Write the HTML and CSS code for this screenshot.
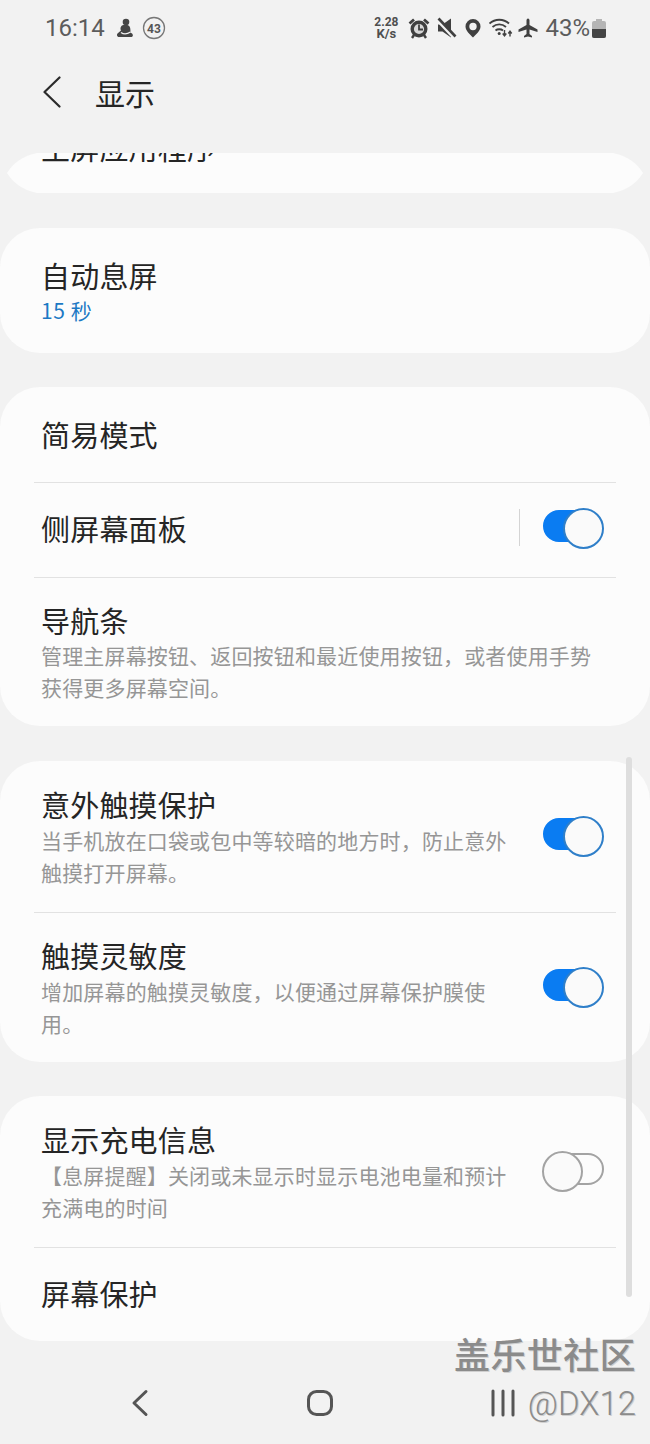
FILE: index.html
```html
<!DOCTYPE html>
<html lang="zh-CN">
<head>
    <meta charset="UTF-8">
    <meta name="viewport" content="width=device-width, initial-scale=1.0">
    <title>显示</title>
    <link rel="stylesheet" href="styles.css">
</head>
<body>

    <div class="status-bar">
        <div class="status-left">
            <span class="clock">16:14</span>
            <svg class="ic-figure" width="18" height="20" viewBox="0 0 18 20"><circle cx="10" cy="4" r="3.300" fill="#454545"/><path d="M7.500 7C4.500 7.500 4 10.500 5 12.500L1.500 15.500C.5 16.500 1 19 3 19H15C17 19 17.500 17 16 15.500L14.500 14.500C14.500 11 14.500 8 11.500 7z" fill="#454545"/><path d="M5 14.500c2.500 1.800 6 1.800 9.500-.5" stroke="#f2f2f2" stroke-width="1.400" fill="none"/></svg>
            <svg class="ic-badge" width="24" height="24" viewBox="0 0 24 24"><circle cx="12" cy="12" r="10.500" fill="none" stroke="#777" stroke-width="1.300"/><text x="12" y="16.500" text-anchor="middle" class="badge-text">43</text></svg>
        </div>
        <div class="status-right">
            <div class="net-speed"><span>2.28</span><span class="net-unit">K/s</span></div>
            <svg class="ic-alarm" width="22" height="22" viewBox="0 0 22 22"><circle cx="11" cy="12" r="6.800" fill="#d8d8d8" stroke="#404040" stroke-width="3.400"/><path d="M11 7.500V12.500H15" stroke="#404040" stroke-width="1.800" fill="none"/><path d="M1.500 6.500L6 2.500M20.500 6.500L16 2.500" stroke="#404040" stroke-width="2.800"/><path d="M6 18l-2 3M16 18l2 3" stroke="#404040" stroke-width="2.400"/></svg>
            <svg class="ic-mute" width="20" height="22" viewBox="0 0 20 22"><path d="M1 7.500h4.500L14 1.500V20.500L5.500 14.500H1z" fill="#404040"/><path d="M0 2.500L17.500 21" stroke="#f2f2f2" stroke-width="3.600"/><path d="M1.500 1.500L18.500 19.500" stroke="#404040" stroke-width="2.600"/></svg>
            <svg class="ic-pin" width="16" height="22" viewBox="0 0 16 22"><path fill-rule="evenodd" d="M8 2a7.500 7.500 0 0 0-7.500 7.500C.5 14 5.500 18 8 20.500 10.500 18 15.500 14 15.500 9.500A7.500 7.500 0 0 0 8 2zm0 3.800a3.700 3.700 0 1 1 0 7.400A3.700 3.700 0 0 1 8 5.800z" fill="#404040"/></svg>
            <svg class="ic-wifi" width="24" height="22" viewBox="0 0 24 22"><path d="M0.500 6.500C6 1.500 14.500 1.500 20 6.500M3.500 10C7.500 6.500 13 6.500 17 10M6.500 13.500C8.500 11.800 12 11.800 14 13.500" stroke="#404040" stroke-width="1.800" fill="none"/><circle cx="10.200" cy="16.500" r="1.500" fill="#404040"/><path d="M15.500 13v5.500M13.700 16.500l1.800 2.300 1.800-2.300M21 19.500v-5M19.300 16.500l1.700-2.300 1.700 2.300" stroke="#404040" stroke-width="1.400" fill="none"/></svg>
            <svg class="ic-plane" width="20" height="22" viewBox="0 0 20 22"><path d="M10 1.500c-1 0-1.500 1-1.500 2V8L.5 12.500V15l8-2.500V17L6 19v1.500l4-1 4 1V19l-2.500-2v-4.500l8 2.500v-2.500L11.500 8V3.500c0-1-.5-2-1.500-2z" fill="#404040"/></svg>
            <span class="battery-pct">43%</span>
            <div class="battery"><div class="battery-fill"></div></div>
        </div>
    </div>

    <header class="top-bar">
        <svg class="back" width="18" height="32" viewBox="0 0 18 32"><path d="M16.500 1.500L1.500 16l15 14.500" stroke="#2b2b2b" stroke-width="2.200" fill="none" stroke-linecap="round" stroke-linejoin="round"/></svg>
        <h1>显示</h1>
    </header>

    <main class="scroller">
        <section class="card card-cut">
            <div class="title cut-title">主屏应用程序</div>
        </section>

        <section class="card">
            <div class="row row-value">
                <div class="title">自动息屏</div>
                <div class="value">15 秒</div>
            </div>
        </section>

        <section class="card card-gap">
            <div class="row row-single"><div class="title">简易模式</div></div>
            <div class="row row-single row-switch">
                <div class="title">侧屏幕面板</div>
                <div class="bar"></div>
                <div class="switch on"></div>
            </div>
            <div class="row row-nav">
                <div class="title">导航条</div>
                <div class="desc">管理主屏幕按钮、返回按钮和最近使用按钮，或者使用手势<br>获得更多屏幕空间。</div>
            </div>
        </section>

        <section class="card">
            <div class="row row-switch">
                <div class="text">
                    <div class="title">意外触摸保护</div>
                    <div class="desc">当手机放在口袋或包中等较暗的地方时，防止意外<br>触摸打开屏幕。</div>
                </div>
                <div class="switch on"></div>
            </div>
            <div class="row row-switch">
                <div class="text">
                    <div class="title">触摸灵敏度</div>
                    <div class="desc">增加屏幕的触摸灵敏度，以便通过屏幕保护膜使<br>用。</div>
                </div>
                <div class="switch on"></div>
            </div>
        </section>

        <section class="card">
            <div class="row row-switch">
                <div class="text">
                    <div class="title">显示充电信息</div>
                    <div class="desc">【息屏提醒】关闭或未显示时显示电池电量和预计<br>充满电的时间</div>
                </div>
                <div class="switch"></div>
            </div>
            <div class="row row-last"><div class="title">屏幕保护</div></div>
        </section>

        <div class="scrollbar"></div>
    </main>

    <nav class="nav-bar">
        <svg width="18" height="28" viewBox="0 0 18 28"><path d="M15 2.500L3 14l12 11.500" stroke="#555" stroke-width="3" fill="none" stroke-linecap="round" stroke-linejoin="round"/></svg>
        <svg width="28" height="28" viewBox="0 0 28 28"><rect x="2.500" y="2.500" width="23" height="23" rx="8" stroke="#555" stroke-width="3" fill="none"/></svg>
        <svg width="26" height="28" viewBox="0 0 26 28"><path d="M3 2v24M13 2v24M23 2v24" stroke="#555" stroke-width="3" stroke-linecap="round"/></svg>
    </nav>

    <div class="watermark">
        <div class="wm-name">盖乐世社区</div>
        <div class="wm-user">@DX12</div>
    </div>

</body>
</html>
```

FILE: styles.css
```css
* {
    box-sizing: border-box;
}
html, body {
    margin: 0;
    padding: 0;
}
body {
    position: relative;
    width: 650px;
    height: 1444px;
    overflow: hidden;
    display: flex;
    flex-direction: column;
    background-color: #f2f2f2;
    color: #252525;
    font-family: "Noto Sans CJK SC", "Noto Sans", sans-serif;
}
.status-bar {
    height: 56px;
    padding: 0 44px 0 45px;
    display: flex;
    justify-content: space-between;
    align-items: center;
    color: #5c5c5c;
    font-family: Roboto, sans-serif;
}
.status-left, .status-right {
    display: flex;
    align-items: center;
}
.clock {
    font-size: 24px;
    margin-right: 11px;
}
.ic-figure {
    margin-right: 8px;
}
.badge-text {
    font-family: Roboto, sans-serif;
    font-size: 12px;
    font-weight: 700;
    fill: #555;
}
.net-speed {
    display: flex;
    flex-direction: column;
    align-items: center;
    font-size: 12px;
    font-weight: 700;
    line-height: 11px;
    color: #4f4f4f;
}
.net-unit {
    font-size: 13px;
    line-height: 12px;
}
.ic-alarm {
    margin-left: 10px;
}
.ic-mute {
    margin-left: 7px;
}
.ic-pin {
    margin-left: 8px;
}
.ic-wifi {
    margin-left: 8px;
}
.ic-plane {
    margin-left: 5px;
}
.battery-pct {
    font-size: 24px;
    margin-left: 7px;
}
.battery {
    position: relative;
    width: 14px;
    height: 17px;
    margin: 2px 0 0 2px;
    background-color: #b5b5b5;
    border-radius: 2px;
}
.battery::before {
    content: "";
    position: absolute;
    top: -2px;
    left: 4px;
    width: 6px;
    height: 2px;
    background-color: #b5b5b5;
}
.battery-fill {
    position: absolute;
    left: 0;
    right: 0;
    bottom: 0;
    height: 9px;
    background-color: #454545;
    border-radius: 0 0 2px 2px;
}
.top-bar {
    height: 97px;
    padding: 0 0 25px 43px;
    display: flex;
    align-items: center;
}
.top-bar h1 {
    margin: 0 0 0 34px;
    font-size: 30px;
    font-weight: 400;
}
.scroller {
    position: relative;
    flex: 1;
    overflow: hidden;
}
.card {
    background-color: #fcfcfc;
    border-radius: 40px;
    margin-bottom: 34px;
}
.card-gap {
    margin-bottom: 35px;
}
.card-cut {
    height: 40px;
    margin: 0 7px 35px;
    border-radius: 0;
    overflow: hidden;
    clip-path: path("M30 0 Q10 4 0 20 Q10 36 30 40 L606 40 Q626 36 636 20 Q626 4 606 0 Z");
}
.cut-title {
    margin: -26px 0 0 34px;
}
.title {
    font-size: 29px;
    line-height: 40px;
    letter-spacing: .2px;
}
.text {
    padding-bottom: 1px;
}
.text .title {
    margin-bottom: 1px;
}
.desc {
    font-size: 21px;
    line-height: 31.5px;
    letter-spacing: .16px;
    color: #969696;
}
.value {
    font-size: 21px;
    line-height: 32px;
    letter-spacing: .6px;
    margin-top: -1px;
    color: #1c79c4;
}
.row {
    position: relative;
    margin: 0 34px;
    padding: 0 7px;
}
.row + .row {
    border-top: 1px solid #e2e2e2;
}
.row-value {
    height: 125px;
    padding-top: 27px;
}
.row-single {
    height: 95px;
    padding-top: 27px;
}
.row-nav {
    height: 149px;
    padding-top: 22px;
}
.row-switch {
    display: flex;
    align-items: center;
    min-height: 151px;
}
.row-switch + .row-switch {
    min-height: 150px;
}
.row-single.row-switch {
    min-height: 95px;
    padding-top: 0;
    padding-bottom: 5px;
}
.row-switch .text {
    flex: 1;
}
.row-last {
    height: 94px;
    padding-top: 25px;
}
.bar {
    width: 1px;
    height: 37px;
    margin-left: auto;
    background-color: #d4d4d4;
}
.row-single.row-switch .switch {
    margin-left: 23px;
    margin-bottom: 3px;
}
.switch {
    position: relative;
    width: 58px;
    height: 32px;
    margin: 0 5px 5px 0;
    border: 2px solid #a3a3a3;
    border-radius: 16px;
    flex-shrink: 0;
}
.switch::after {
    content: "";
    position: absolute;
    top: -4.500px;
    left: -6px;
    width: 37px;
    height: 37px;
    border: 2px solid #a3a3a3;
    border-radius: 50%;
    background-color: #fafafa;
}
.switch.on {
    width: 57px;
    margin-right: 9px;
    border-color: #0a7cf2;
    background-color: #0a7cf2;
}
.switch.on::after {
    left: auto;
    right: -6px;
    border-color: #2f7fc9;
}
.scrollbar {
    position: absolute;
    top: 604px;
    left: 626px;
    width: 6px;
    height: 540px;
    border-radius: 3px;
    background-color: #dedede;
}
.nav-bar {
    height: 69px;
    padding: 14px 134px 0 131px;
    display: flex;
    justify-content: space-between;
    align-items: flex-start;
}
.watermark {
    position: absolute;
    right: 14px;
    top: 1329px;
    text-align: right;
    color: #8b8b8b;
    text-shadow: 1px 1px 0 #cfcfcf;
}
.wm-name {
    font-size: 36px;
    line-height: 48px;
    font-weight: 500;
    letter-spacing: .4px;
}
.wm-user {
    font-family: Roboto, sans-serif;
    font-size: 33px;
    font-weight: 300;
    line-height: 54px;
}
```
